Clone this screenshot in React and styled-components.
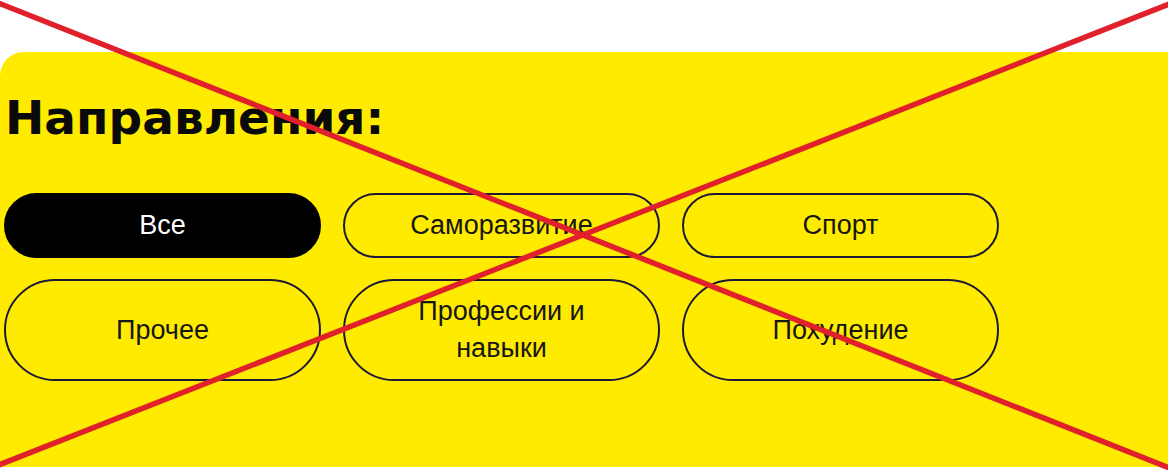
import React from "react";
import styled, { createGlobalStyle } from "styled-components";

const GlobalStyle = createGlobalStyle`
	html, body {
		margin: 0;
		padding: 0;
		background: #ffffff;
	}
	body {
		font-family: "Liberation Sans", Arial, sans-serif;
	}
`;

const Page = styled.div`
	position: relative;
	width: 1168px;
	height: 470px;
	overflow: hidden;
	padding-top: 52px;
	box-sizing: border-box;
`;

const Panel = styled.section`
	height: 415px;
	background: #ffeb00;
	border-top-left-radius: 24px;
	padding: 36px 0 0 4px;
	box-sizing: border-box;
`;

const Title = styled.h2`
	margin: 0 0 45px 1px;
	font-family: "DejaVu Sans", Inter, sans-serif;
	font-weight: 700;
	font-size: 47px;
	line-height: 60px;
	color: #0a0a0a;
`;

const Grid = styled.div`
	display: grid;
	grid-template-columns: repeat(3, 317px);
	column-gap: 22px;
	row-gap: 21px;
`;

const Chip = styled.button`
	display: flex;
	align-items: center;
	justify-content: center;
	min-height: 65px;
	padding: 12px 46px;
	box-sizing: border-box;
	border: 2px solid ${(p) => (p.$active ? "#000" : "#1d1838")};
	border-radius: 999px;
	background: ${(p) => (p.$active ? "#000" : "transparent")};
	color: ${(p) => (p.$active ? "#fff" : "#161616")};
	font-family: "Liberation Sans", Arial, sans-serif;
	font-size: 27px;
	line-height: 37px;
	text-align: center;
	cursor: pointer;
`;

const Cross = styled.svg`
	position: absolute;
	left: 0;
	top: 0;
	pointer-events: none;
`;

const directions = [
	"Все",
	"Саморазвитие",
	"Спорт",
	"Прочее",
	"Профессии и навыки",
	"Похудение",
];

export default function App() {
	return (
		<>
			<GlobalStyle />
			<Page>
				<Panel>
					<Title>Направления:</Title>
					<Grid>
						{directions.map((name, i) => (
							<Chip key={name} $active={i === 0}>
								{name}
							</Chip>
						))}
					</Grid>
				</Panel>
				{/* red strike-through over the whole block */}
				<Cross width="1168" height="470" viewBox="0 0 1168 470">
					<line x1="-4" y1="2" x2="1172" y2="469" stroke="#e0212b" strokeWidth="5.5" />
					<line x1="-4" y1="466" x2="1172" y2="3" stroke="#e0212b" strokeWidth="5.5" />
				</Cross>
			</Page>
		</>
	);
}
